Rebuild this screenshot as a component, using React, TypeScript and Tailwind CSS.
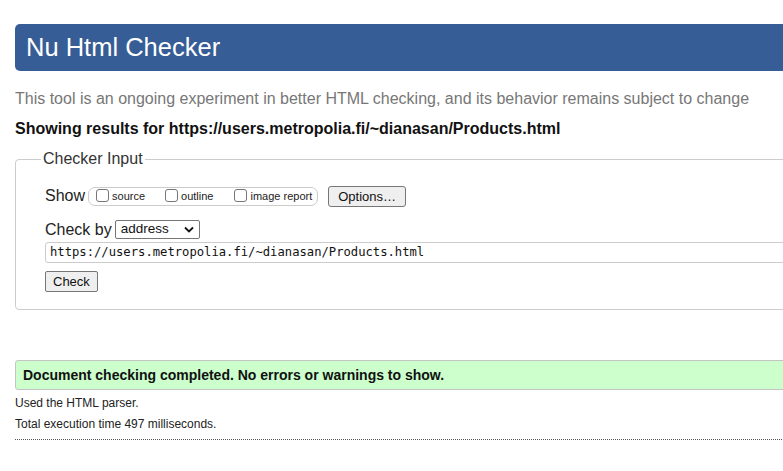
import React from 'react';

function Box({ label }: { label: string }) {
  return (
    <label className="flex items-center text-[11px] leading-none text-[#222]">
      <span className="w-[13px] h-[13px] rounded-[3px] border border-[#767676] bg-white inline-block mb-[2px]" />
      <span className="ml-[3px]">{label}</span>
    </label>
  );
}

export default function App() {
  return (
    <div className="w-[783px] h-[471px] overflow-hidden bg-white" style={{ fontFamily: '"Liberation Sans", Arial, sans-serif' }}>
      <div className="w-[900px] pl-[15px] pt-[24px]">
        {/* Header */}
        <div className="h-[47px] rounded-[5px] bg-[#365d95] flex items-center pl-[11px]">
          <h1 className="text-[25.5px] text-white leading-none">Nu Html Checker</h1>
        </div>

        <p className="mt-[19px] text-[16px] leading-[18px] text-[#777]">
          This tool is an ongoing experiment in better HTML checking, and its behavior remains subject to change
        </p>
        <p className="mt-[12px] text-[16px] leading-[18px] font-bold text-[#111]">
          Showing results for https://users.metropolia.fi/~dianasan/Products.html
        </p>

        {/* Checker input */}
        <fieldset className="mt-[12px] border border-[#ccc] rounded-[4px] pl-[29px] pt-[6px] pb-[16px]">
          <legend className="ml-[-4px] px-[2px] text-[16px] leading-[18px] text-[#333]">Checker Input</legend>

          <div className="flex items-center mt-[11px] h-[22px]">
            <span className="text-[16px] text-[#222] mr-[3px]">Show</span>
            <span className="flex items-center h-[19px] border border-[#ccc] rounded-[7px] pl-[7px] pr-[5px]">
              <Box label="source" />
              <span className="w-[20px]" />
              <Box label="outline" />
              <span className="w-[21px]" />
              <Box label="image report" />
            </span>
            <button className="ml-[10px] h-[21px] px-[9px] text-[13px] text-[#111] bg-[#efefef] border border-[#767676] rounded-[3px]">
              Options…
            </button>
          </div>

          <div className="flex items-center mt-[13px] h-[19px]">
            <span className="text-[16px] text-[#222] mr-[3px]">Check by</span>
            <span className="flex items-center justify-between w-[85px] h-[19px] border border-[#767676] rounded-[2px] pl-[5px] pr-[5px] text-[13.5px] text-[#111]">
              address
              <svg width="10" height="7" viewBox="0 0 10 7"><path d="M1 1.5 L5 5.5 L9 1.5" fill="none" stroke="#111" strokeWidth="1.8" /></svg>
            </span>
          </div>

          <div className="mt-[3px] h-[21px] border border-[#ccc] rounded-[3px] flex items-center pl-[4px] text-[12.2px] text-[#111]" style={{ fontFamily: '"DejaVu Sans Mono", monospace' }}>
            https://users.metropolia.fi/~dianasan/Products.html
          </div>

          <button className="mt-[8px] h-[21px] px-[7px] text-[13px] text-[#111] bg-[#efefef] border border-[#767676] rounded-[2px]">
            Check
          </button>
        </fieldset>

        {/* Result */}
        <div className="mt-[50px] h-[30px] bg-[#ccffcc] border border-[#c4c4c4] rounded-l-[3px] flex items-center pl-[7px]">
          <p className="text-[14px] font-bold text-[#111]">Document checking completed. No errors or warnings to show.</p>
        </div>
        <p className="mt-[6px] text-[12px] leading-[14px] text-[#222]">Used the HTML parser.</p>
        <p className="mt-[7px] text-[12px] leading-[14px] text-[#222]">Total execution time 497 milliseconds.</p>
        <div className="mt-[8px] border-t border-dotted border-[#555]" />
      </div>
    </div>
  );
}
